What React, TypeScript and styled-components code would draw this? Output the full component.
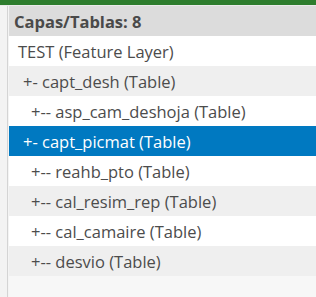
import React from "react";
import styled, { createGlobalStyle } from "styled-components";

const Global = createGlobalStyle`
  html, body { margin: 0; padding: 0; background: #f4f4f4; }
  body { font-family: "Open Sans", "Lato", sans-serif; }
`;

const Page = styled.div`
  width: 316px;
  height: 297px;
  display: flex;
  flex-direction: column;
  overflow: hidden;
`;

const TopBar = styled.div`
  height: 5px;
  background: #2e7d2e;
  border-bottom: 1px solid #eaeaea;
  flex: none;
`;

const Body = styled.div`
  flex: 1;
  display: flex;
`;

const Gutter = styled.div`
  width: 7px;
  background: #f3f3f3;
  border-right: 1px solid #d4d4d4;
  flex: none;
`;

const Panel = styled.div`
  flex: 1;
  margin-left: 1px;
  background: #f7f7f7;
  display: flex;
  flex-direction: column;
`;

const Header = styled.div`
  height: 30px;
  background: #dcdcdc;
  display: flex;
  align-items: center;
  padding-left: 5px;
  font-size: 16.5px;
  font-weight: 700;
  color: #4a4a4a;
`;

const Row = styled.div<{ $alt: boolean; $selected: boolean; $indent: number }>`
  height: 30px;
  display: flex;
  align-items: center;
  padding-left: ${(p) => p.$indent}px;
  font-size: 16.5px;
  color: ${(p) => (p.$selected ? "#ffffff" : "#4c4c4c")};
  background: ${(p) => (p.$selected ? "#0079c1" : p.$alt ? "#efefef" : "#ffffff")};
  white-space: pre;
`;

const items: { text: string; indent: number }[] = [
  { text: "TEST (Feature Layer)", indent: 9 },
  { text: "+- capt_desh (Table)", indent: 14 },
  { text: "+-- asp_cam_deshoja (Table)", indent: 22 },
  { text: "+- capt_picmat (Table)", indent: 14 },
  { text: "+-- reahb_pto (Table)", indent: 22 },
  { text: "+-- cal_resim_rep (Table)", indent: 22 },
  { text: "+-- cal_camaire (Table)", indent: 22 },
  { text: "+-- desvio (Table)", indent: 22 },
];

export default function App() {
  return (
    <Page>
      <Global />
      <TopBar />
      <Body>
        <Gutter />
        <Panel>
          <Header>Capas/Tablas: 8</Header>
          {items.map((it, i) => (
            <Row key={i} $alt={i % 2 === 1} $selected={i === 3} $indent={it.indent}>
              {it.text}
            </Row>
          ))}
        </Panel>
      </Body>
    </Page>
  );
}
